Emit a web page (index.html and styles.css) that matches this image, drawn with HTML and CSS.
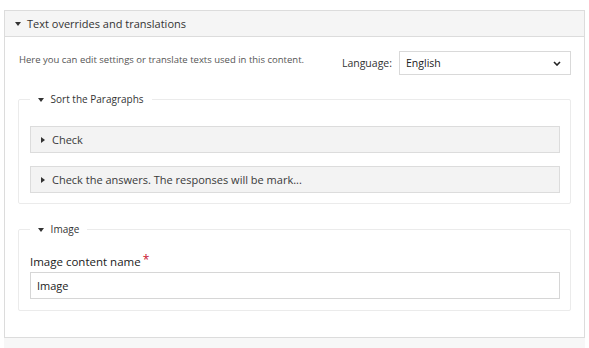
FILE: index.html
```html
<!DOCTYPE html>
<html lang="en">
<head>
    <meta charset="UTF-8">
    <title>Text overrides and translations</title>
    <link rel="stylesheet" href="styles.css">
</head>
<body>
    <div class="panel">
        <div class="panel-head">
            <svg class="tri" width="6" height="4" viewBox="0 0 6 4"><path d="M0 0h6L3 4z" fill="#333"/></svg>
            <span>Text overrides and translations</span>
        </div>
        <div class="panel-body">
            <div class="top-row">
                <p class="desc">Here you can edit settings or translate texts used in this content.</p>
                <label class="lang">
                    <span>Language:</span>
                    <span class="select">
                        <span>English</span>
                        <svg width="8" height="5" viewBox="0 0 8 5"><path d="M1 1l3 3 3-3" fill="none" stroke="#222" stroke-width="1.6"/></svg>
                    </span>
                </label>
            </div>

            <fieldset class="group">
                <legend>
                    <svg class="tri" width="6" height="4" viewBox="0 0 6 4"><path d="M0 0h6L3 4z" fill="#333"/></svg>
                    Sort the Paragraphs
                </legend>
                <div class="item">
                    <svg class="tri" width="4" height="6" viewBox="0 0 4 6"><path d="M0 0v6l4-3z" fill="#333"/></svg>
                    Check
                </div>
                <div class="item">
                    <svg class="tri" width="4" height="6" viewBox="0 0 4 6"><path d="M0 0v6l4-3z" fill="#333"/></svg>
                    Check the answers. The responses will be mark...
                </div>
            </fieldset>

            <fieldset class="group image-group">
                <legend>
                    <svg class="tri" width="6" height="4" viewBox="0 0 6 4"><path d="M0 0h6L3 4z" fill="#333"/></svg>
                    Image
                </legend>
                <div class="field-label">Image content name<span class="req">*</span></div>
                <div class="input">Image</div>
            </fieldset>
        </div>
    </div>
    <div class="bottom"></div>
</body>
</html>
```

FILE: styles.css
```css
body {
    margin: 0;
    padding: 10px 4px 0;
    font-family: "Open Sans", "Liberation Sans", sans-serif;
    color: #333;
    background: #fff;
}
.panel {
    border: 1px solid #dcdcdc;
    background: #fff;
}
.panel-head {
    height: 25px;
    background: #f5f5f5;
    border-bottom: 1px solid #dcdcdc;
    display: flex;
    align-items: center;
    padding-left: 10px;
    font-size: 11px;
    color: #333;
}
.panel-head .tri {
    margin-right: 6px;
}
.panel-body {
    padding: 14px 13px 26px 13px;
}
.top-row {
    display: flex;
    justify-content: space-between;
    align-items: flex-start;
    margin-bottom: 16px;
}
.desc {
    margin: 2px 0 0 1px;
    font-size: 9.5px;
    color: #555;
    white-space: nowrap;
}
.lang {
    display: flex;
    align-items: center;
    gap: 7px;
    font-size: 10.5px;
    color: #333;
}
.select {
    width: 155px;
    height: 22px;
    border: 1px solid #d9d9d9;
    display: flex;
    align-items: center;
    justify-content: space-between;
    padding: 0 9px 0 6px;
    font-size: 10.5px;
    color: #222;
}
.group {
    margin: 0;
    border: 1px solid #ebebeb;
    border-radius: 2px;
    padding: 19px 10px 10px 11px;
}
.group legend {
    padding: 0 8px;
    font-size: 10px;
    font-weight: 500;
    color: #333;
    line-height: 16px;
}
.group legend .tri {
    margin-right: 4px;
    vertical-align: 1px;
}
.item {
    height: 25px;
    background: #f3f3f3;
    border: 1px solid #dcdcdc;
    display: flex;
    align-items: center;
    padding-left: 10px;
    font-size: 11px;
    color: #3a3a3a;
}
.item .tri {
    margin-right: 7px;
}
.item + .item {
    margin-top: 13px;
}
.image-group {
    margin-top: 17px;
    padding-top: 14px;
    padding-bottom: 11px;
}
.field-label {
    font-size: 11.5px;
    font-weight: 400;
    color: #1a1a1a;
    margin-bottom: 3px;
}
.req {
    color: #c8102e;
    font-size: 12px;
    vertical-align: 2px;
    margin-left: 2px;
}
.input {
    height: 25px;
    border: 1px solid #d6d6d6;
    display: flex;
    align-items: center;
    padding-left: 6px;
    font-size: 11px;
    color: #222;
}
.bottom {
    height: 11px;
    background: #f7f7f7;
}
```
